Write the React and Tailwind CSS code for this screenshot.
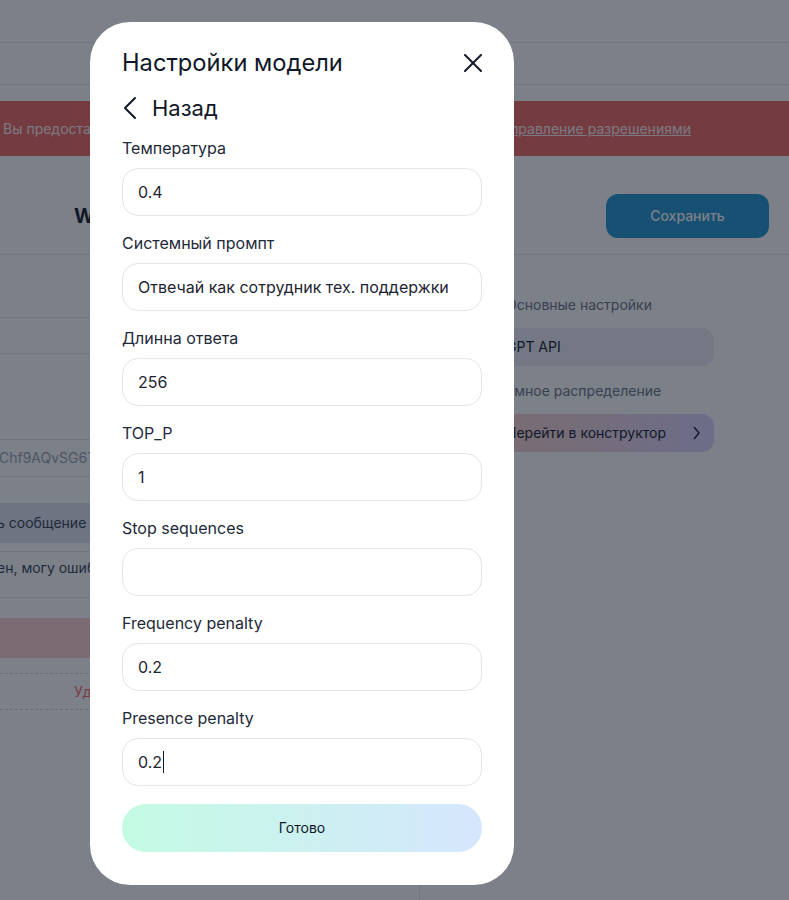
const fields = [
  { label: "Температура", value: "0.4" },
  { label: "Системный промпт", value: "Отвечай как сотрудник тех. поддержки" },
  { label: "Длинна ответа", value: "256" },
  { label: "TOP_P", value: "1" },
  { label: "Stop sequences", value: "" },
  { label: "Frequency penalty", value: "0.2" },
  { label: "Presence penalty", value: "0.2", focused: true }
];

const BackgroundPage = () => (
  <div className="w-full bg-white font-['Inter',sans-serif]">
    <div className="h-[43px] border-b border-gray-200" />
    <div className="h-[42px] border-b border-gray-200" />
    <div className="mt-4 flex h-[55px] items-center justify-between bg-[#ed6660] pl-[3px] pr-[98px] text-sm text-white/90">
      <span>Вы предоставили доступ не ко всем функциям</span>
      <span className="underline">Управление разрешениями</span>
    </div>
    <div className="flex h-[99px] items-start justify-between border-b border-gray-200 pl-[74px] pr-[20px] pt-[38px]">
      <h2 className="mt-[8px] text-xl font-bold text-gray-900">WhatsApp ассистент</h2>
      <button className="h-[44px] w-[163px] rounded-xl bg-[#2196cc] text-sm font-medium text-white">
        Сохранить
      </button>
    </div>
    <div className="flex">
      <div className="w-[420px] overflow-hidden border-r border-gray-200 pb-[200px]">
        <div className="h-[63px] border-b border-gray-200" />
        <div className="h-[36px] border-b border-gray-200" />
        <div className="h-[86px] border-b border-gray-200" />
        <div className="flex h-[37px] items-center border-b border-gray-200 text-sm text-gray-400">
          <span className="-ml-[1px]">Chf9AQvSG6Tk2mLq8ZxW</span>
        </div>
        <div className="mt-[26px] flex h-[40px] items-center bg-[#dfe4ed] text-sm text-gray-700">
          <span className="-ml-[3px]">ь сообщение клиенту</span>
        </div>
        <div className="mt-[8px] h-[47px] border-y border-gray-200 pt-[6px] text-sm text-gray-700">
          <span className="-ml-[3px]">ен, могу ошибаться</span>
        </div>
        <div className="mt-[20px] h-[40px] bg-[#fcd0cd]" />
        <div className="mt-[15px] flex h-[37px] items-center border-y border-dashed border-gray-300 pl-[74px] text-sm text-red-400">
          Удалить ассистента
        </div>
      </div>
      <div className="box-content flex w-[222px] flex-col pl-[72px] pt-[40px]">
        <p className="pl-[14px] text-sm leading-5 text-gray-500">Основные настройки</p>
        <div className="mt-[13px] flex h-[38px] items-center rounded-xl bg-[#ebedf3] px-[14px] text-sm text-gray-900">
          GPT API
        </div>
        <p className="mt-[15px] pl-[14px] text-sm leading-5 text-gray-500">Умное распределение</p>
        <div className="mt-[13px] flex h-[38px] items-center justify-between rounded-xl bg-gradient-to-r from-[#fcd5c8] to-[#ddd6fe] pl-[14px] pr-[14px] text-sm text-gray-900">
          <span>Перейти в конструктор</span>
          <svg width="7" height="14" viewBox="0 0 7 14" fill="none" stroke="currentColor" strokeWidth="1.4">
            <polyline points="1,1 6,7 1,13" />
          </svg>
        </div>
      </div>
    </div>
  </div>
);

const Field = ({ label, value, focused }) => (
  <div className="flex flex-col">
    <p className="text-base leading-6 text-gray-800">{label}</p>
    <div className="mt-2 flex h-[48px] items-center rounded-2xl border border-[#e4e4ea] px-[15px] text-base text-[#1f2433]">
      <span>{value}</span>
      {focused ? <span className="ml-[1px] h-[22px] w-px bg-gray-900" /> : null}
    </div>
  </div>
);

const App = () => (
  <div className="relative h-[900px] w-full overflow-hidden font-['Inter',sans-serif]">
    <BackgroundPage />
    <div className="absolute inset-0 bg-gray-900/55 pl-[90px] pt-[22px]">
      <div className="flex w-[424px] flex-col rounded-[40px] bg-white px-8 pb-[33px] pt-[25px]">
        <div className="flex h-8 items-center justify-between">
          <h1 className="text-[23.7px] text-gray-900">Настройки модели</h1>
          <svg width="18" height="18" viewBox="0 0 18 18" fill="none" stroke="#111827" strokeWidth="2" strokeLinecap="round">
            <line x1="1" y1="1" x2="17" y2="17" />
            <line x1="17" y1="1" x2="1" y2="17" />
          </svg>
        </div>
        <div className="mt-[15px] flex h-7 items-center gap-[15px]">
          <svg className="ml-[1px]" width="14" height="24" viewBox="0 0 14 24" fill="none" stroke="#111827" strokeWidth="2" strokeLinecap="round" strokeLinejoin="round">
            <polyline points="12,2 2,12 12,22" />
          </svg>
          <span className="text-[22px] text-gray-900">Назад</span>
        </div>
        <div className="mt-[14px] flex flex-col gap-[15px]">
          {fields.map((field) => (
            <Field key={field.label} {...field} />
          ))}
        </div>
        <button className="mt-[18px] h-[48px] w-full rounded-full bg-gradient-to-r from-[#c3fbe3] to-[#d5e6fd] text-sm text-gray-900">
          Готово
        </button>
      </div>
    </div>
  </div>
);

export default App;
